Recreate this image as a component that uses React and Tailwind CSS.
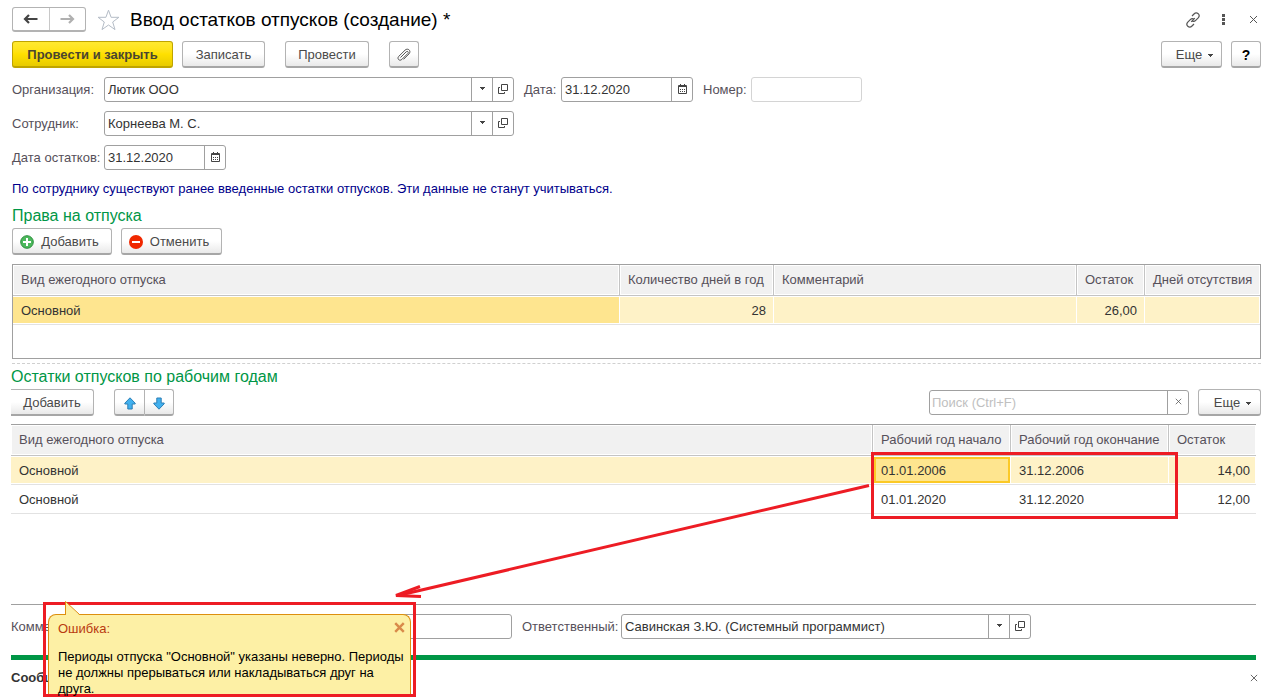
import { useState } from 'react'

const RIGHTS = [
  { kind: 'Основной', days: '28', comment: '', rest: '26,00', absent: '' },
]

const YEARS = [
  { kind: 'Основной', from: '01.01.2006', to: '31.12.2006', rest: '14,00' },
  { kind: 'Основной', from: '01.01.2020', to: '31.12.2020', rest: '12,00' },
]

const BTN =
  'flex h-[27px] shrink-0 items-center justify-center rounded-[3px] border border-[#b3b3b3] border-b-2 border-b-[#a6a6a6] bg-linear-to-b from-white from-50% to-[#e9e9e9] pt-[2px] text-[#4a4a4a]'
const TH =
  'h-[31px] border-b border-[#c4c4c4] bg-[#f1f1f1] px-2 text-left font-normal whitespace-nowrap text-[#56505a] shadow-[inset_0_0_0_1px_#fff]'
const TD =
  'h-[29px] border-b border-[#e2e2e2] px-2 pt-[2px] whitespace-nowrap shadow-[inset_-1px_0_0_#fff,inset_0_1px_0_#fff,inset_0_-1px_0_#fff]'
const TD_ACTIVE =
  'h-[29px] border-b border-[#e2e2e2] bg-[#fee58f] px-2 pt-[2px] whitespace-nowrap shadow-[inset_0_0_0_1px_#fff,inset_0_0_0_3px_#fbc926]'

function Caret() {
  return (
    <svg width="5" height="3" viewBox="0 0 5 3" fill="#444" shapeRendering="crispEdges">
      <path d="M0 0h5v1H4v1H3v1H2V2H1V1H0z" />
    </svg>
  )
}

function OpenIcon() {
  return (
    <svg width="10" height="10" viewBox="0 0 10 10" fill="none" stroke="#444">
      <path d="M3.5.5h6v6h-6zM2 3.5H.5v6h6V8" />
    </svg>
  )
}

function CalendarIcon() {
  return (
    <svg width="9" height="10" viewBox="0 0 9 10" fill="none" stroke="#444">
      <path d="M.5 1.5h8v8h-8zM0 2.5h9M2.5 0v2M6.5 0v2" />
      <path d="M2 5.5h5M2 7.5h5" strokeDasharray="1 1" />
    </svg>
  )
}

function Cross({ size = 9, color = '#555', width = 1 }) {
  return (
    <svg width={size} height={size} viewBox="0 0 9 9" fill="none" stroke={color} strokeWidth={width}>
      <path d="M1 1l7 7M8 1L1 8" />
    </svg>
  )
}

function NavArrow({ color, flip }) {
  return (
    <svg width="15" height="10" viewBox="0 0 15 10" fill="none" stroke={color} strokeWidth="2.2" className={flip ? 'rotate-180' : ''}>
      <path d="M14.5 5H2M6 1L2 5l4 4" />
    </svg>
  )
}

function MoveArrow({ flip }) {
  return (
    <svg width="12" height="13" viewBox="0 0 12 13" className={flip ? 'rotate-180' : ''}>
      <path d="M6 .8L11.2 6.2V7H8.2v5H3.8V7H.8v-.8z" fill="#41b0ee" stroke="#2d7fb5" />
    </svg>
  )
}

function Field({ id, label, value, width, labelWidth = '', icons = [], light }) {
  return (
    <div className="flex h-[25px] shrink-0 items-center">
      <label htmlFor={id} className={`shrink-0 whitespace-nowrap text-[#56505a] ${labelWidth}`}>
        {label}
      </label>
      <div className={`flex h-[25px] rounded-[3px] border bg-white ${light ? 'border-[#d4d4d4]' : 'border-[#a0a0a0]'} ${width}`}>
        <input id={id} defaultValue={value} className="min-w-0 flex-1 px-[3px] text-[#333] outline-none" />
        {icons.map(icon => (
          <button
            key={icon}
            aria-label={icon}
            className="flex w-[21px] shrink-0 items-center justify-center border-l border-[#a0a0a0] pb-[2px]"
          >
            {icon === 'Список' && <Caret />}
            {icon === 'Открыть' && <OpenIcon />}
            {icon === 'Календарь' && <CalendarIcon />}
          </button>
        ))}
      </div>
    </div>
  )
}

function TitleBar() {
  return (
    <header className="flex h-[25px] items-center pr-[3px]">
      <div className="flex h-[25px] w-[74px] rounded-[3px] border border-b-2 border-[#b3b3b3]">
        <button aria-label="Назад" className="flex flex-1 items-center justify-center border-r border-[#c8c8c8]">
          <NavArrow color="#444" />
        </button>
        <button aria-label="Вперед" className="flex flex-1 items-center justify-center">
          <NavArrow color="#b0b0b0" flip />
        </button>
      </div>
      <button aria-label="В избранное" className="ml-[11px]">
        <svg width="23" height="22" viewBox="0 0 23 22" fill="none" stroke="#b4bcc6">
          <path d="M11.5 1.2l2.6 7.1h7.8l-6.2 4.7 2.3 7.6-6.5-4.6L5 20.6l2.3-7.6L1.1 8.3h7.8z" />
        </svg>
      </button>
      <h1 className="ml-[10px] flex-1 text-[19px] leading-6 whitespace-nowrap text-black">
        Ввод остатков отпусков (создание) *
      </h1>
      <div className="flex items-center">
        <button aria-label="Получить ссылку">
          <svg width="16" height="16" viewBox="0 0 16 16" fill="none" stroke="#555" strokeWidth="1.2">
            <path d="M7 4l2-2c1.3-1.3 3-1.3 4.2-.3 1.2 1.2 1.2 2.9 0 4.2l-2.5 2.5c-1 1-2.2 1.200-3.200.7M9 12l-2 2c-1.300 1.300-3 1.300-4.200.3-1.200-1.200-1.200-2.900 0-4.200l2.500-2.500c1-1 2.200-1.200 3.200-.7M6.200 9.800l3.600-3.600" />
          </svg>
        </button>
        <button aria-label="Меню" className="ml-5">
          <svg width="4" height="11" viewBox="0 0 4 11" fill="#555">
            <path d="M1 0h3v3H1zM1 4h3v3H1zM1 8h3v3H1z" />
          </svg>
        </button>
        <button aria-label="Закрыть" className="ml-6">
          <Cross />
        </button>
      </div>
    </header>
  )
}

function Toolbar() {
  return (
    <div className="mt-[9px] flex">
      <button className="flex h-[27px] w-[161px] items-center justify-center rounded-[3px] border border-b-2 border-[#bfa400] bg-linear-to-b from-[#ffe930] via-[#ffe000] to-[#e8cb00] pt-[2px] font-bold text-[#4a4530]">
        Провести и закрыть
      </button>
      <button className={`${BTN} ml-[9px] w-[83px]`}>Записать</button>
      <button className={`${BTN} ml-5 w-[84px]`}>Провести</button>
      <button aria-label="Файлы" className={`${BTN} ml-5 w-[30px]`}>
        <svg width="14" height="14" viewBox="0 0 14 14" fill="none" stroke="#555">
          <path d="M3.5 9.5l5.7-5.7c1.3-1.2 2.900.3 1.700 1.600l-6 6c-2.300 2.200-5.300-.6-3.200-3l6.300-6.200c3-2.800 6.600.7 4 3.700l-5.500 5.500" />
        </svg>
      </button>
      <button className={`${BTN} ml-auto w-[61px] gap-[6px] pl-[6px]`}>
        Еще <Caret />
      </button>
      <button className={`${BTN} ml-[9px] w-[30px] text-[14px] font-bold text-black`}>?</button>
    </div>
  )
}

function RightsTable() {
  return (
    <div className="mt-[9px] h-[95px] border border-[#a0a0a0]">
      <table className="w-full table-fixed border-separate border-spacing-0">
        <colgroup>
          <col />
          <col className="w-[154px]" />
          <col className="w-[303px]" />
          <col className="w-[68px]" />
          <col className="w-[115px]" />
        </colgroup>
        <thead>
          <tr>
            <th className={`${TH} border-r`}>Вид ежегодного отпуска</th>
            <th className={`${TH} border-r`}>Количество дней в год</th>
            <th className={`${TH} border-r`}>Комментарий</th>
            <th className={`${TH} border-r`}>Остаток</th>
            <th className={TH}>Дней отсутствия</th>
          </tr>
        </thead>
        <tbody>
          {RIGHTS.map(row => (
            <tr key={row.kind} className="bg-[#fef2c7]">
              <td className={`${TD} bg-[#fee58f]`}>{row.kind}</td>
              <td className={`${TD} text-right`}>{row.days}</td>
              <td className={TD}>{row.comment}</td>
              <td className={`${TD} text-right`}>{row.rest}</td>
              <td className={TD}>{row.absent}</td>
            </tr>
          ))}
        </tbody>
      </table>
    </div>
  )
}

function YearsTable() {
  return (
    <div className="relative mt-2 mr-[5px] h-[181px] border-y border-[#a0a0a0]">
      <table className="w-full table-fixed border-separate border-spacing-0">
        <colgroup>
          <col />
          <col className="w-[138px]" />
          <col className="w-[158px]" />
          <col className="w-[87px]" />
        </colgroup>
        <thead>
          <tr>
            <th className={`${TH} border-r`}>Вид ежегодного отпуска</th>
            <th className={`${TH} border-r`}>Рабочий год начало</th>
            <th className={`${TH} border-r`}>Рабочий год окончание</th>
            <th className={TH}>Остаток</th>
          </tr>
        </thead>
        <tbody>
          {YEARS.map((row, i) => (
            <tr key={row.from} className={i === 0 ? 'bg-[#fef2c7]' : ''}>
              <td className={TD}>{row.kind}</td>
              <td className={i === 0 ? TD_ACTIVE : TD}>{row.from}</td>
              <td className={TD}>{row.to}</td>
              <td className={`${TD} pr-[6px] text-right`}>{row.rest}</td>
            </tr>
          ))}
        </tbody>
      </table>

      {/* Highlighted periods and the arrow to the error */}
      <div className="pointer-events-none absolute top-[27px] right-[78px] h-[67px] w-[307px] border-3 border-[#ed1c24]" />
      <svg
        width="476"
        height="116"
        viewBox="0 0 476 116"
        fill="none"
        stroke="#ed1c24"
        strokeWidth="3"
        className="pointer-events-none absolute top-[59px] right-[386px]"
      >
        <path d="M475 1.500L4 111.500" />
        <path d="M26 102.500L2 111.500l25 1" />
      </svg>
    </div>
  )
}

function ErrorPopup({ onClose }) {
  return (
    <div className="absolute -top-[3px] bottom-0 left-[32px] w-[373px] border-3 border-[#ed1c24]">
      <div className="mx-[2px] mt-[9px] h-[80px] rounded-t-lg border border-b-0 border-[#dd8f0e] bg-[#fdf0a5] pt-1 pl-[9px]">
        <div className="flex h-5 items-center justify-between pr-[5px]">
          <span className="text-[#b93a10]">Ошибка:</span>
          <button aria-label="Закрыть сообщение" onClick={onClose} className="-mt-1">
            <Cross size={11} color="#d98a4a" width={2} />
          </button>
        </div>
        <p className="mt-[10px] leading-4 whitespace-nowrap text-black">
          Периоды отпуска "Основной" указаны неверно. Периоды
          <br />
          не должны прерываться или накладываться друг на
          <br />
          друга.
        </p>
      </div>
      <svg width="16" height="15" viewBox="0 0 16 15" className="absolute -top-[4px] left-[19px]">
        <path d="M.5 15V.5L14.5 14v1z" fill="#fdf0a5" />
        <path d="M.5 14V.5L14.5 13.5" fill="none" stroke="#dd8f0e" />
      </svg>
    </div>
  )
}

export default function App() {
  const [showError, setShowError] = useState(true)

  return (
    <div className="min-h-screen overflow-hidden bg-white pt-[7px] pr-[2px] pl-[11px] font-['Liberation_Sans',Arial,sans-serif] text-[13px] leading-5 text-[#333]">
      <div className="pl-px">
        <TitleBar />
        <Toolbar />

        {/* Document fields */}
        <div className="mt-[9px] flex flex-col gap-[9px]">
          <div className="flex gap-[10px]">
            <Field id="org" label="Организация:" value="Лютик ООО" labelWidth="w-[92px]" width="w-[410px]" icons={['Список', 'Открыть']} />
            <Field id="date" label="Дата:" value="31.12.2020" labelWidth="w-[37px]" width="w-[132px]" icons={['Календарь']} />
            <Field id="number" label="Номер:" value="" labelWidth="w-[48px]" width="w-[111px]" light />
          </div>
          <Field id="employee" label="Сотрудник:" value="Корнеева М. С." labelWidth="w-[92px]" width="w-[410px]" icons={['Список', 'Открыть']} />
          <Field id="restDate" label="Дата остатков:" value="31.12.2020" labelWidth="w-[92px]" width="w-[122px]" icons={['Календарь']} />
        </div>
        <p className="mt-[9px] text-[#00008b]">
          По сотруднику существуют ранее введенные остатки отпусков. Эти данные не станут учитываться.
        </p>

        {/* Rights */}
        <h2 className="mt-[7px] text-[16px] leading-5 text-[#009646]">Права на отпуска</h2>
        <div className="mt-[2px] flex gap-[9px]">
          <button className={`${BTN} w-[100px] gap-[7px] pr-[5px]`}>
            <svg width="14" height="14" viewBox="0 0 14 14">
              <circle cx="7" cy="7" r="6.3" fill="#4cb85c" stroke="#2b8f3c" />
              <path d="M7 3v8M3 7h8" stroke="#fff" strokeWidth="2" />
            </svg>
            Добавить
          </button>
          <button className={`${BTN} w-[101px] gap-[7px] pr-[5px]`}>
            <svg width="14" height="14" viewBox="0 0 14 14">
              <circle cx="7" cy="7" r="7" fill="#f02800" />
              <path d="M3 7h8" stroke="#fff" strokeWidth="2" />
            </svg>
            Отменить
          </button>
        </div>
        <RightsTable />
        <div className="mt-1 border-t border-dashed border-[#d0d0d0]" />
      </div>

      {/* Balances by working year */}
      <h2 className="mt-[3px] text-[16px] leading-5 text-[#009646]">Остатки отпусков по рабочим годам</h2>
      <div className="mt-[2px] flex items-start">
        <button className={`${BTN} w-[83px] rounded-l-none border-l-0`}>Добавить</button>
        <div className="ml-5 flex">
          <button aria-label="Вверх" className={`${BTN} w-[31px] rounded-r-none`}>
            <MoveArrow />
          </button>
          <button aria-label="Вниз" className={`${BTN} w-[29px] rounded-l-none border-l-0`}>
            <MoveArrow flip />
          </button>
        </div>
        <div className="mt-px ml-auto flex h-[25px] w-[260px] rounded-[3px] border border-[#a0a0a0]">
          <input
            aria-label="Поиск"
            placeholder="Поиск (Ctrl+F)"
            className="min-w-0 flex-1 px-[2px] outline-none placeholder:text-[#c0c0c0]"
          />
          <button aria-label="Очистить" className="flex w-[21px] items-center justify-center border-l border-[#a0a0a0] pb-[2px]">
            <Cross size={7} />
          </button>
        </div>
        <button className={`${BTN} ml-[9px] w-[63px] gap-[6px] pl-[6px]`}>
          Еще <Caret />
        </button>
      </div>
      <YearsTable />

      {/* Footer */}
      <footer className="relative mr-[5px] pt-[9px] pb-[9px]">
        <div className="flex gap-[10px]">
          <Field id="comment" label="Комментарий:" value="" labelWidth="w-[91px]" width="w-[410px]" />
          <Field
            id="responsible"
            label="Ответственный:"
            value="Савинская З.Ю. (Системный программист)"
            labelWidth="w-[99px]"
            width="w-[410px]"
            icons={['Список', 'Открыть']}
          />
        </div>
        <div className="mt-4 h-[5px] bg-[#009646]" />
        <div className="mt-2 flex h-5 items-center justify-between font-bold">
          <span>Сообщения:</span>
          <button aria-label="Закрыть сообщения" className="-mr-[2px]">
            <Cross size={8} />
          </button>
        </div>
        {showError && <ErrorPopup onClose={() => setShowError(false)} />}
      </footer>
    </div>
  )
}
